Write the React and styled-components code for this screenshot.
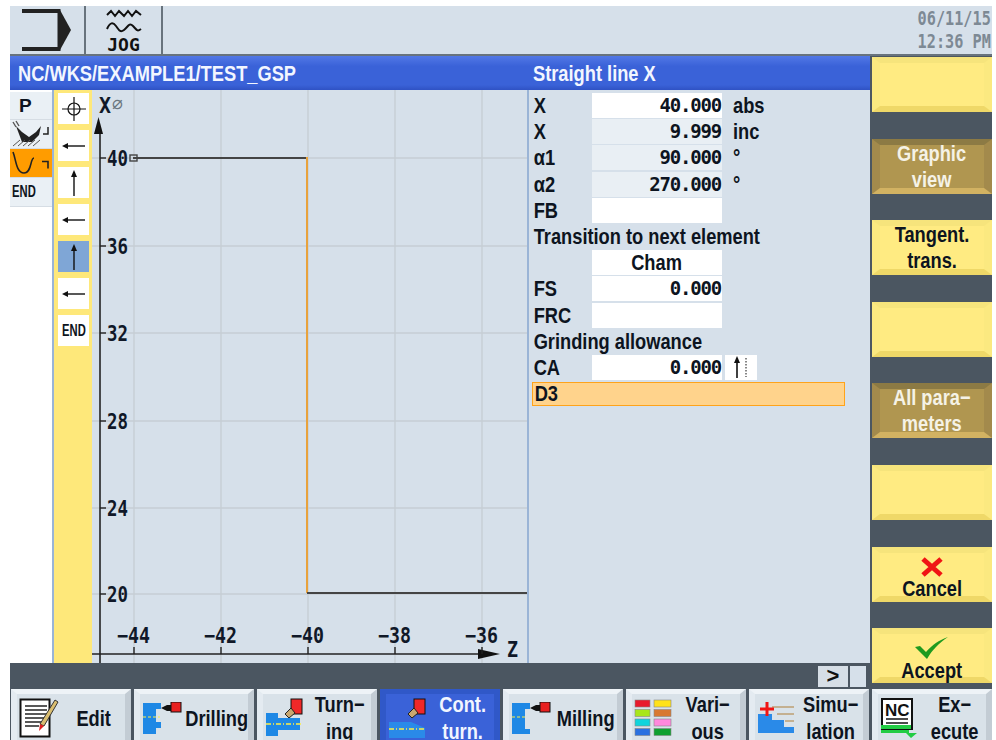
import styled, { createGlobalStyle, css } from "styled-components";

const FONT = `"Liberation Sans", Roboto, sans-serif`;
const MONO = `"DejaVu Sans Mono", "Liberation Mono", monospace`;

const GlobalStyle = createGlobalStyle`
  html, body {
    margin: 0;
    height: 740px;
    background: #fff;
    overflow: hidden;
  }
  body {
    font-family: ${FONT};
  }
`;

// the control font is much narrower than anything installed
const narrow = (origin = "left", amount = 0.83) => css`
  transform: scaleX(${amount});
  transform-origin: ${origin} center;
  white-space: nowrap;
`;

const formRows = [
  { label: "X", value: "40.000", unit: "abs" },
  { label: "X", value: "9.999", unit: "inc", calc: true },
  { label: "α1", value: "90.000", unit: "°", calc: true },
  { label: "α2", value: "270.000", unit: "°", calc: true },
  { label: "FB", value: "" },
  { heading: "Transition to next element" },
  { label: "", text: "Cham" },
  { label: "FS", value: "0.000" },
  { label: "FRC", value: "" },
  { heading: "Grinding allowance" },
  { label: "CA", value: "0.000", dirIcon: true },
];

const gridX = [134, 221, 308, 395, 482];
const gridY = [158, 246, 333, 421, 508, 594];
const xLabels = ["40", "36", "32", "28", "24", "20"];
const zLabels = ["−44", "−42", "−40", "−38", "−36"];

const JogIcon = () => (
  <svg width="36" height="28" viewBox="0 0 36 28">
    <path d="M1 7l4-4 4 5 4-5 5 5 4-5 4 5 4-5 5 4" fill="none" stroke="#111" strokeWidth="2" />
    <path d="M1 21c3-7 6-7 9-3s4 7 8 4 5-8 9-4 4 6 8 3" fill="none" stroke="#111" strokeWidth="2" />
  </svg>
);

const ExitIcon = () => (
  <svg width="50" height="42" viewBox="0 0 50 42">
    <path d="M0 2h38M0 40h38" stroke="#222" strokeWidth="4" />
    <path d="M37 0v42" stroke="#222" strokeWidth="3" />
    <path d="M38 1l11 20-11 20z" fill="#222" />
  </svg>
);

const TreeContour = () => (
  <svg width="42" height="29" viewBox="0 0 42 29">
    <path d="M3 3c3 7 3 21 11 21s6-15 10-15" fill="none" stroke="#222" strokeWidth="1.6" />
    <path d="M32 12.500h6v7" fill="none" stroke="#222" strokeWidth="1.6" />
  </svg>
);

const TreeBlank = () => (
  <svg width="42" height="28" viewBox="0 0 42 28">
    <path d="M6 6l6 6 7 5 7-5 5-6-2 9-7 7H12z" fill="#222" />
    <path d="M3 26l7-6M8 26l7-6M13 26l7-6M18 26l7-6M23 26l7-6" stroke="#555" strokeWidth="1" />
    <path d="M3 2l3 5M6 1l3 5" stroke="#555" strokeWidth="1.4" />
    <path d="M38 7v7h-5" fill="none" stroke="#222" strokeWidth="1.5" />
  </svg>
);

const Crosshair = () => (
  <svg width="24" height="24" viewBox="0 0 24 24">
    <circle cx="12" cy="12" r="6" fill="none" stroke="#111" strokeWidth="1.2" />
    <path d="M12 0v24M0 12h24" stroke="#111" strokeWidth="1.2" />
  </svg>
);

const ArrowLeft = () => (
  <svg width="24" height="14" viewBox="0 0 24 14">
    <path d="M3 7h20" stroke="#111" strokeWidth="1.4" />
    <path d="M0 7l6-3v6z" fill="#111" />
  </svg>
);

const ArrowUp = () => (
  <svg width="10" height="26" viewBox="0 0 10 26">
    <path d="M5 3v23" stroke="#111" strokeWidth="1.4" />
    <path d="M5 0l3 7H2z" fill="#111" />
  </svg>
);

const DirectionIcon = () => (
  <svg width="24" height="24" viewBox="0 0 24 24">
    <path d="M8 4v19" stroke="#111" strokeWidth="1.6" />
    <path d="M8 1l3 7H5z" fill="#111" />
    <path d="M17 3v19" stroke="#555" strokeWidth="1.4" strokeDasharray="1.5 1.5" />
  </svg>
);

const CancelIcon = () => (
  <svg width="24" height="20" viewBox="0 0 24 20">
    <path d="M3 2l18 16M21 2L3 18" stroke="#f01414" strokeWidth="5" />
  </svg>
);

const AcceptIcon = () => (
  <svg width="34" height="22" viewBox="0 0 34 22">
    <path d="M0 10l5-1 6 6C17 8 24 3 33 0 24 6 17 13 12 22z" fill="#1f9a1f" />
  </svg>
);

const EditIcon = () => (
  <svg width="40" height="40" viewBox="0 0 40 40">
    <rect x="1.500" y="1.500" width="29" height="37" fill="#fff" stroke="#111" strokeWidth="2" />
    <path d="M6 8h22M6 12h22M6 16h22M6 20h20M6 24h16M6 28h14" stroke="#222" strokeWidth="1.5" />
    <path d="M36 2l3 2-14 24-4-2z" fill="#d9bd70" stroke="#333" />
    <path d="M21 26l4 2-5 5z" fill="#e02020" />
  </svg>
);

const DrillingIcon = () => (
  <svg width="40" height="32" viewBox="0 0 40 32">
    <path d="M1 1h18v6h-5v13h5v6h-5v6H1z" fill="#1e88e5" />
    <path d="M1 15h17" stroke="#ffee44" strokeWidth="1" strokeDasharray="3 2" />
    <path d="M19 6l6-3h5v6h-5z" fill="#111" />
    <rect x="29" y="0" width="10" height="10" fill="#e82020" stroke="#111" />
  </svg>
);

const TurningIcon = () => (
  <svg width="40" height="40" viewBox="0 0 40 40">
    <rect x="26" y="1" width="11" height="15" fill="#f02828" stroke="#111" />
    <path d="M26 10l-6 6 4 4 6-5z" fill="#c9a870" stroke="#222" />
    <path d="M1 15h12v5h22v12H13v6H1z" fill="#1e88e5" />
    <path d="M1 26h36" stroke="#ffee44" strokeWidth="1.400" strokeDasharray="5 2 1 2" />
  </svg>
);

const ContourIcon = () => (
  <svg width="40" height="40" viewBox="0 0 40 40">
    <rect x="26" y="1" width="11" height="15" fill="#f02828" stroke="#111" />
    <path d="M26 10l-6 6 4 4 6-5z" fill="#c9a870" stroke="#222" />
    <path d="M1 24h22l14 6v10H1z" fill="#2a8ae8" />
    <path d="M1 31h36" stroke="#ffee44" strokeWidth="1.400" strokeDasharray="5 2 1 2" />
  </svg>
);

const MillingIcon = () => (
  <svg width="40" height="32" viewBox="0 0 40 32">
    <path d="M1 1h18v6h-5v20h5v5H1z" fill="#1e88e5" />
    <path d="M1 15h14" stroke="#ffee44" strokeWidth="1" strokeDasharray="3 2" />
    <path d="M19 6l6-3h5v6h-5z" fill="#111" />
    <rect x="29" y="0" width="10" height="10" fill="#e82020" stroke="#111" />
  </svg>
);

const VariousIcon = () => (
  <svg width="38" height="38" viewBox="0 0 38 38">
    {[
      ["#e81a2c", "#ffe21a"],
      ["#a8e61a", "#d87830"],
      ["#10d4dc", "#ff88dc"],
      ["#2a70e0", "#10a030"],
    ].map(([a, b], i) => (
      <g key={i}>
        <rect x="1" y={1 + i * 9.5} width="15" height="7" fill={a} stroke="#888" strokeWidth="0.6" />
        <rect x="20" y={1 + i * 9.5} width="17" height="7" fill={b} stroke="#888" strokeWidth="0.6" />
      </g>
    ))}
  </svg>
);

const SimulationIcon = () => (
  <svg width="38" height="32" viewBox="0 0 38 32">
    <path d="M1 12h14v6h12v7h10v6H1z" fill="#2a8ae8" />
    <path d="M15 5h22M20 12h17M28 19h9" stroke="#c4b090" strokeWidth="2" />
    <path d="M10 0v14M3 7h14" stroke="#f01414" strokeWidth="3" />
  </svg>
);

const ExecuteIcon = () => (
  <svg width="40" height="40" viewBox="0 0 40 40">
    <rect x="2" y="1" width="30" height="30" fill="#fff" stroke="#111" strokeWidth="2" />
    <text x="5" y="18" fontFamily={FONT} fontWeight="700" fontSize="17" fill="#111">NC</text>
    <path d="M6 21h22M6 25h22" stroke="#111" strokeWidth="1.400" />
    <path d="M1 27h30v4H1z" fill="#22cc44" />
    <path d="M1 32h28v3h8l-6 5-5-5H1z" fill="#22cc44" />
  </svg>
);

const ContourGraph = () => (
  <GraphSvg viewBox="0 0 435 573">
    {/* grid, coordinates relative to the panel's corner */}
    {gridX.map((x) => (
      <line key={x} x1={x - 92} x2={x - 92} y1="0" y2="573" stroke="#c6ced4" strokeWidth="1.4" />
    ))}
    {gridY.map((y) => (
      <line key={y} x1="0" x2="435" y1={y - 90} y2={y - 90} stroke="#c6ced4" strokeWidth="1.4" />
    ))}

    {/* axes */}
    <line x1="8" x2="8" y1="40" y2="573" stroke="#222" strokeWidth="1.6" />
    <path d="M6.500 27l4.500 17H2z" fill="#111" />
    <line x1="0" x2="395" y1="564" y2="564" stroke="#222" strokeWidth="1.6" />
    <path d="M408 564l-22-5v10z" fill="#111" />
    {gridY.map((y) => (
      <line key={y} x1="8" x2="14" y1={y - 90} y2={y - 90} stroke="#222" strokeWidth="1.4" />
    ))}
    {gridX.map((x) => (
      <line key={x} x1={x - 92} x2={x - 92} y1="557" y2="564" stroke="#222" strokeWidth="1.4" />
    ))}

    {/* contour */}
    <line x1="41" x2="216" y1="68" y2="68" stroke="#444" strokeWidth="2" />
    <line x1="215" x2="215" y1="67" y2="503" stroke="#e8a23c" strokeWidth="2" />
    <line x1="215" x2="435" y1="503" y2="503" stroke="#444" strokeWidth="2" />
    <rect x="38" y="65" width="7" height="6" fill="none" stroke="#444" strokeWidth="1.4" />

    <AxisText x="7" y="23" textLength="12" lengthAdjust="spacingAndGlyphs">X</AxisText>
    <DiameterText x="20" y="19">⌀</DiameterText>
    {xLabels.map((label, i) => (
      <AxisText key={label} x="15" y={gridY[i] - 90 + 8} textLength="21" lengthAdjust="spacingAndGlyphs">
        {label}
      </AxisText>
    ))}
    {zLabels.map((label, i) => (
      <AxisText key={label} x={gridX[i] - 92 - 17} y="553" textLength="33" lengthAdjust="spacingAndGlyphs">
        {label}
      </AxisText>
    ))}
    <AxisText x="415" y="567" textLength="11" lengthAdjust="spacingAndGlyphs">Z</AxisText>
  </GraphSvg>
);

export default function App() {
  return (
    <>
      <GlobalStyle />
      <Screen>
        <TopBar>
          <ModeCell $w={76}><ExitIcon /></ModeCell>
          <ModeCell $w={77}>
            <JogIcon />
            <JogLabel>JOG</JogLabel>
          </ModeCell>
          <Clock>06/11/15<br />12:36 PM</Clock>
        </TopBar>

        <Middle>
          <Workspace>
            <TitleBar>
              <TitleLeft>NC/WKS/EXAMPLE1/TEST_GSP</TitleLeft>
              <TitleRight>Straight line X</TitleRight>
            </TitleBar>
            <Body>
              <Tree>
                <TreeItem><TreeP>P</TreeP></TreeItem>
                <TreeItem $h={29}><TreeBlank /></TreeItem>
                <TreeItem $h={29} $selected><TreeContour /></TreeItem>
                <TreeItem $h={29}><EndText $inTree>END</EndText></TreeItem>
              </Tree>
              <ChainStrip>
                <ChainButton><Crosshair /></ChainButton>
                <ChainButton><ArrowLeft /></ChainButton>
                <ChainButton><ArrowUp /></ChainButton>
                <ChainButton><ArrowLeft /></ChainButton>
                <ChainButton $selected><ArrowUp /></ChainButton>
                <ChainButton><ArrowLeft /></ChainButton>
                <ChainButton><EndText>END</EndText></ChainButton>
              </ChainStrip>
              <ContourGraph />
              <FormPanel>
                {formRows.map((row, i) =>
                  row.heading ? (
                    <FormHeading key={i}>{row.heading}</FormHeading>
                  ) : (
                    <FormRow key={i}>
                      <FormLabel>{row.label}</FormLabel>
                      <ValueBox $calc={row.calc}>
                        {row.text ? <ChoiceText>{row.text}</ChoiceText> : row.value}
                      </ValueBox>
                      {row.unit && <Unit>{row.unit}</Unit>}
                      {row.dirIcon && <DirBox><DirectionIcon /></DirBox>}
                    </FormRow>
                  )
                )}
                <ActiveRow><FormLabel>D3</FormLabel></ActiveRow>
              </FormPanel>
            </Body>
            <StatusStrip>
              <MoreButton>&gt;</MoreButton>
              <StatusStub />
            </StatusStrip>
          </Workspace>

          <VerticalKeys>
            <SoftKey />
            <SoftKey $on><KeyCaption>Graphic<br />view</KeyCaption></SoftKey>
            <SoftKey><KeyCaption>Tangent.<br />trans.</KeyCaption></SoftKey>
            <SoftKey />
            <SoftKey $on><KeyCaption>All para−<br />meters</KeyCaption></SoftKey>
            <SoftKey />
            <SoftKey>
              <CancelIcon />
              <KeyCaption>Cancel</KeyCaption>
            </SoftKey>
            <SoftKey>
              <AcceptIcon />
              <KeyCaption>Accept</KeyCaption>
            </SoftKey>
          </VerticalKeys>
        </Middle>

        <HorizontalKeys>
          <MenuKey><EditIcon /><MenuText>Edit</MenuText></MenuKey>
          <MenuKey><DrillingIcon /><MenuText>Drilling</MenuText></MenuKey>
          <MenuKey><TurningIcon /><MenuText>Turn−<br />ing</MenuText></MenuKey>
          <MenuKey $active><ContourIcon /><MenuText>Cont.<br />turn.</MenuText></MenuKey>
          <MenuKey><MillingIcon /><MenuText>Milling</MenuText></MenuKey>
          <MenuKey><VariousIcon /><MenuText>Vari−<br />ous</MenuText></MenuKey>
          <MenuKey><SimulationIcon /><MenuText>Simu−<br />lation</MenuText></MenuKey>
          <MenuKey><ExecuteIcon /><MenuText>Ex−<br />ecute</MenuText></MenuKey>
        </HorizontalKeys>
      </Screen>
    </>
  );
}

// Styled components

const Screen = styled.div`
  width: 982px;
  height: 734px;
  margin: 6px 4px 0 10px;
  background: #4b5661;
  display: flex;
  flex-direction: column;
  overflow: hidden;
  font-weight: 700;
  font-size: 22px;
  color: #0d1420;
`;

const TopBar = styled.header`
  flex: 0 0 50px;
  box-sizing: border-box;
  display: flex;
  background: #d6e0ea;
  border-bottom: 2px solid #68737d;
`;

const ModeCell = styled.div`
  width: ${(p) => p.$w}px;
  box-sizing: border-box;
  border-right: 2px solid #68737d;
  display: flex;
  flex-direction: column;
  align-items: center;
  justify-content: center;
`;

const JogLabel = styled.span`
  font-family: ${MONO};
  font-size: 18px;
  line-height: 15px;
  color: #111;
  margin-top: 1px;
`;

const Clock = styled.div`
  margin-left: auto;
  padding: 1px 2px 0 0;
  text-align: right;
  font-family: ${MONO};
  font-size: 20px;
  line-height: 23px;
  color: #7d8994;
  ${narrow("right", 0.76)}
`;

const Middle = styled.div`
  flex: 1;
  display: flex;
  min-height: 0;
`;

const Workspace = styled.div`
  width: 860px;
  display: flex;
  flex-direction: column;
`;

const TitleBar = styled.div`
  flex: 0 0 34px;
  box-sizing: border-box;
  padding-top: 1px;
  display: grid;
  grid-template-columns: 523px 1fr;
  align-items: center;
  color: #f2f6ff;
  background: linear-gradient(#5278e6 0, #3a62d8 30%, #3a62d8 85%, #2f52c4 100%);
`;

const TitleLeft = styled.span`
  margin-left: 8px;
  ${narrow()}
`;

const TitleRight = styled.span`
  ${narrow()}
`;

const Body = styled.div`
  flex: 0 0 573px;
  display: flex;
`;

const Tree = styled.div`
  width: 42px;
  background: #fff;
  display: flex;
  flex-direction: column;
  padding-top: 2px;
  box-sizing: border-box;
`;

const TreeItem = styled.div`
  height: ${(p) => p.$h || 28}px;
  background: ${(p) => (p.$selected ? "#ff9c00" : "#eaf0f5")};
  border-bottom: 1px solid #d6dde4;
  box-sizing: border-box;
  display: flex;
  align-items: center;
  overflow: hidden;
`;

const TreeP = styled.span`
  font-size: 19px;
  padding-left: 9px;
`;

const EndText = styled.span`
  font-size: 17px;
  margin-left: ${(p) => (p.$inTree ? "-4px" : "0")};
  ${narrow("center", 0.66)}
`;

const ChainStrip = styled.div`
  width: 40px;
  box-sizing: border-box;
  border-left: 2px solid #9ab4d6;
  background: #fee87a;
  padding: 3px 3px 0 4px;
  display: flex;
  flex-direction: column;
  gap: 6px;
`;

const ChainButton = styled.div`
  flex: 0 0 31px;
  background: ${(p) => (p.$selected ? "#7fa6d6" : "#fff")};
  display: flex;
  align-items: center;
  justify-content: center;
`;

const GraphSvg = styled.svg`
  width: 435px;
  height: 573px;
  background: #d6e0ea;
  display: block;
  flex: none;
`;

const AxisText = styled.text`
  font-family: ${MONO};
  font-weight: 700;
  font-size: 22px;
  fill: #101828;
`;

const DiameterText = styled.text`
  font-family: "DejaVu Sans", sans-serif;
  font-weight: 400;
  font-size: 18px;
  fill: #6b7680;
`;

const FormPanel = styled.div`
  flex: 1;
  box-sizing: border-box;
  border-left: 2px solid #9ab4d6;
  background: #d6e0ea;
  padding: 3px 25px 0 3px;
  display: flex;
  flex-direction: column;
  gap: 1.2px;
`;

const FormRow = styled.div`
  flex: 0 0 25px;
  min-height: 0;
  display: flex;
  align-items: center;
  line-height: 25px;
`;

const FormLabel = styled.span`
  width: 60px;
  padding-left: 2px;
  box-sizing: border-box;
  ${narrow()}
`;

const ValueBox = styled.div`
  width: 130px;
  height: 25px;
  line-height: 25px;
  box-sizing: border-box;
  padding-right: 1px;
  background: ${(p) => (p.$calc ? "#e9eff4" : "#fff")};
  text-align: right;
  font-family: ${MONO};
  font-size: 19px;
  letter-spacing: -1.2px;
`;

const ChoiceText = styled.span`
  display: block;
  text-align: center;
  font-family: ${FONT};
  font-size: 22px;
  letter-spacing: 0;
  ${narrow("center")}
`;

const Unit = styled.span`
  margin-left: 11px;
  ${narrow()}
`;

const DirBox = styled.div`
  margin-left: 3px;
  width: 32px;
  height: 25px;
  background: #fff;
  display: flex;
  justify-content: center;
`;

const FormHeading = styled.div`
  flex: 0 0 25px;
  min-height: 0;
  line-height: 25px;
  padding-left: 2px;
  ${narrow()}
`;

const ActiveRow = styled.div`
  flex: 0 0 24px;
  min-height: 0;
  margin-top: 1px;
  box-sizing: border-box;
  border: 1px solid #ffa31a;
  background: #ffd38c;
  line-height: 22px;
  display: flex;
`;

const StatusStrip = styled.div`
  flex: 0 0 26px;
  display: flex;
  justify-content: flex-end;
  align-items: flex-start;
  gap: 2px;
  padding: 3px 4px 0 0;
  box-sizing: border-box;
`;

const MoreButton = styled.div`
  width: 30px;
  height: 21px;
  line-height: 20px;
  text-align: center;
  background: #d6dee6;
  color: #111;
`;

const StatusStub = styled.div`
  width: 16px;
  height: 21px;
  background: #d6e0ea;
`;

const VerticalKeys = styled.div`
  width: 122px;
  box-sizing: border-box;
  padding: 1px 0 0 2px;
  display: flex;
  flex-direction: column;
  gap: 26.6px;
`;

const SoftKey = styled.div`
  flex: 0 0 55px;
  min-height: 0;
  width: 120px;
  box-sizing: border-box;
  border-style: solid;
  border-width: 6px 8px;
  border-color: ${(p) =>
    p.$on
      ? "#8c7a44 #a38a4c #d2b262 #a38a4c"
      : "#f6e47c #fbe980 #efd868 #fbe980"};
  background: ${(p) => (p.$on ? "#b09650" : "#ffeb82")};
  color: ${(p) => (p.$on ? "#f5f2e6" : "#0d1420")};
  display: flex;
  flex-direction: column;
  align-items: center;
  justify-content: center;
`;

const KeyCaption = styled.span`
  text-align: center;
  line-height: 26px;
  padding-top: 1px;
  ${narrow("center")}
  svg + & {
    line-height: 22px;
    margin-bottom: -8px;
  }
`;

const HorizontalKeys = styled.div`
  flex: 0 0 51px;
  display: flex;
  gap: 3px;
  padding-left: 1px;
  overflow: hidden;
`;

const MenuKey = styled.div`
  flex: 0 0 120px;
  height: 58px;
  box-sizing: border-box;
  border-style: solid;
  border-width: 5px 6px;
  border-color: ${(p) =>
    p.$active ? "#3058c8" : "#eef3f7 #c3ccd4 #c3ccd4 #e4ebf1"};
  background: ${(p) => (p.$active ? "#3a62d8" : "#d9e2e9")};
  color: ${(p) => (p.$active ? "#f2f6ff" : "#0d1420")};
  display: flex;
  align-items: center;
  padding-left: 2px;
  svg {
    flex: none;
  }
`;

const MenuText = styled.div`
  flex: 1;
  margin: 0 -12px;
  padding-left: 4px;
  text-align: center;
  line-height: 27px;
  ${narrow("center")}
`;
